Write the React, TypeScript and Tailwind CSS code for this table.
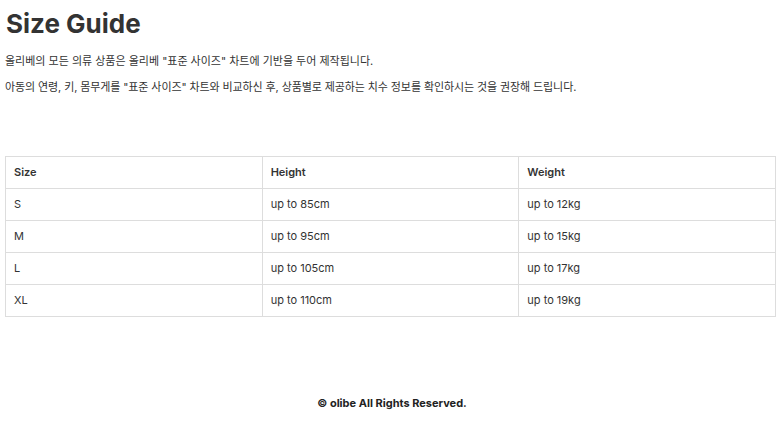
const rows = [
  { size: "S", height: "up to 85cm", weight: "up to 12kg" },
  { size: "M", height: "up to 95cm", weight: "up to 15kg" },
  { size: "L", height: "up to 105cm", weight: "up to 17kg" },
  { size: "XL", height: "up to 110cm", weight: "up to 19kg" },
];

export default function App() {
  return (
    <div className="min-h-[423px] bg-white px-[5px] text-[#333] font-['Inter','Noto_Sans_CJK_KR',sans-serif]">
      <h1 className="pt-[7px] pl-px text-[26px] leading-[34px] font-bold">Size Guide</h1>
      <p className="mt-[12px] text-[11px] leading-[16px]">
        올리베의 모든 의류 상품은 올리베 "표준 사이즈" 차트에 기반을 두어 제작됩니다.
      </p>
      <p className="mt-[10px] text-[11px] leading-[16px] tracking-[-0.1px]">
        아동의 연령, 키, 몸무게를 "표준 사이즈" 차트와 비교하신 후, 상품별로 제공하는 치수 정보를 확인하시는 것을 권장해 드립니다.
      </p>
      <table className="mt-[61px] w-[771px] table-fixed border-collapse text-[11px]">
        <thead>
          <tr className="h-[32px]">
            <th className="border border-[#ddd] px-[8px] text-left font-semibold">Size</th>
            <th className="border border-[#ddd] px-[8px] text-left font-semibold">Height</th>
            <th className="border border-[#ddd] px-[8px] text-left font-semibold">Weight</th>
          </tr>
        </thead>
        <tbody>
          {rows.map((r) => (
            <tr key={r.size} className="h-[32px]">
              <td className="border border-[#ddd] px-[8px]">{r.size}</td>
              <td className="border border-[#ddd] px-[8px]">{r.height}</td>
              <td className="border border-[#ddd] px-[8px]">{r.weight}</td>
            </tr>
          ))}
        </tbody>
      </table>
      <footer className="mt-[78px] pb-[12px] text-center text-[11px] font-bold text-[#222]">
        © olibe All Rights Reserved.
      </footer>
    </div>
  );
}
